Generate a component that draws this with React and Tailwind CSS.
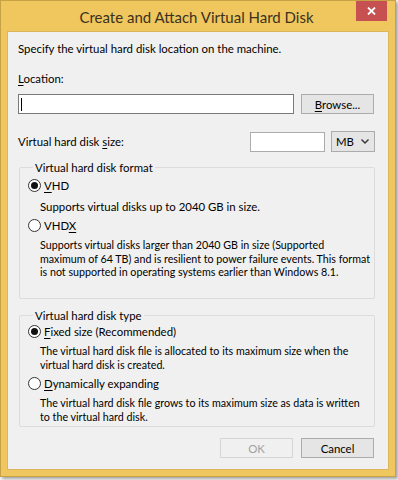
import React from 'react';

const U = ({ children }) => <span className="underline underline-offset-2">{children}</span>;

const Radio = ({ checked, children }) => (
  <div className="flex items-center h-[15px]">
    <span className="w-[13px] h-[13px] rounded-full border border-[#333] bg-white flex items-center justify-center">
      {checked && <span className="w-[7px] h-[7px] rounded-full bg-[#111]" />}
    </span>
    <span className="ml-[3px]">{children}</span>
  </div>
);

const Button = ({ children, disabled }) => (
  <div
    className={`w-[73px] h-[20px] flex items-center justify-center border ${
      disabled ? 'border-[#d5d5d5] text-[#a0a0a0] bg-[#f0f0f0]' : 'border-[#acacac] bg-[#e5e5e5] text-black'
    }`}
  >
    {children}
  </div>
);

const GroupBox = ({ title, className, children }) => (
  <fieldset className={`min-w-0 border border-[#dcdcdc] rounded-[2px] ml-[1px] mr-0 ${className}`}>
    <legend className="ml-[5px] px-[2px] leading-[15px]">{title}</legend>
    {children}
  </fieldset>
);

export default function App() {
  return (
    <div className="w-[398px] h-[480px] bg-[#fafafa] text-[11.4px] text-black" style={{ fontFamily: 'Lato, "Open Sans", sans-serif' }}>
      <div className="w-[396px] h-[477px] bg-[#f0c75e] border border-[#c7a145] flex flex-col shadow-[2px_2px_3px_rgba(0,0,0,0.35)]">
        <div className="h-[30px] flex items-start shrink-0">
          <div className="flex-1 text-center text-[15px] text-[#3b3220] pt-[5px] pl-[36px]">Create and Attach Virtual Hard Disk</div>
          <div className="w-[31px] h-[20px] bg-[#c75050] mr-[8px] flex items-center justify-center">
            <svg width="9" height="8" viewBox="0 0 9 8">
              <path d="M1 0.5 L8 7.5 M8 0.5 L1 7.5" stroke="white" strokeWidth="1.8" />
            </svg>
          </div>
        </div>
        <div className="mx-[6px] mb-[6px] flex-1 bg-[#f0f0f0] border border-[#dcb65a] pl-[10px] pr-[13px] leading-[15px]">
          <div className="mt-[9px]">Specify the virtual hard disk location on the machine.</div>
          <div className="mt-[15px]"><U>L</U>ocation:</div>
          <div className="mt-[8px] flex">
            <div className="w-[276px] h-[20px] bg-white border border-[#7a7a7a] flex items-center pl-[2px]">
              <span className="w-px h-[13px] bg-black" />
            </div>
            <div className="ml-[7px]">
              <Button><span><U>B</U>rowse...</span></Button>
            </div>
          </div>
          <div className="mt-[17px] flex items-center">
            <div className="flex-1">Virtual hard disk <U>s</U>ize:</div>
            <div className="w-[75px] h-[20px] bg-white border border-[#acacac]" />
            <div className="ml-[6px] w-[44px] h-[21px] bg-[#e5e5e5] border border-[#acacac] flex items-center justify-between pl-[4px] pr-[5px]">
              <span>MB</span>
              <svg width="8" height="5" viewBox="0 0 8 5">
                <path d="M0.5 0.5 L4 4 L7.5 0.5" stroke="#333" strokeWidth="1.4" fill="none" />
              </svg>
            </div>
          </div>
          <GroupBox title="Virtual hard disk format" className="mt-[8px] h-[139px] pl-[8px] pr-[2px]">
            <div className="mt-[3px]"><Radio checked><U>V</U>HD</Radio></div>
            <div className="mt-[6px] ml-[12px]">Supports virtual disks up to 2040 GB in size.</div>
            <div className="mt-[4px]"><Radio>VHD<U>X</U></Radio></div>
            <div className="mt-[5px] ml-[12px] text-[10.7px] leading-[13.5px] whitespace-nowrap">
              Supports virtual disks larger than 2040 GB in size (Supported<br />
              maximum of 64 TB) and is resilient to power failure events. This format<br />
              is not supported in operating systems earlier than Windows 8.1.
            </div>
          </GroupBox>
          <GroupBox title="Virtual hard disk type" className="mt-[9px] h-[119px] pl-[8px] pr-[2px]">
            <div className="mt-[1px]"><Radio checked><U>F</U>ixed size (Recommended)</Radio></div>
            <div className="mt-[5px] ml-[12px] text-[10.7px] leading-[13.5px] whitespace-nowrap">
              The virtual hard disk file is allocated to its maximum size when the<br />
              virtual hard disk is created.
            </div>
            <div className="mt-[5px]"><Radio><U>D</U>ynamically expanding</Radio></div>
            <div className="mt-[5px] ml-[12px] text-[10.7px] leading-[13.5px] whitespace-nowrap">
              The virtual hard disk file grows to its maximum size as data is written<br />
              to the virtual hard disk.
            </div>
          </GroupBox>
          <div className="mt-[11px] flex justify-end gap-[8px] mr-[1px]">
            <Button disabled>OK</Button>
            <Button>Cancel</Button>
          </div>
        </div>
      </div>
    </div>
  );
}
